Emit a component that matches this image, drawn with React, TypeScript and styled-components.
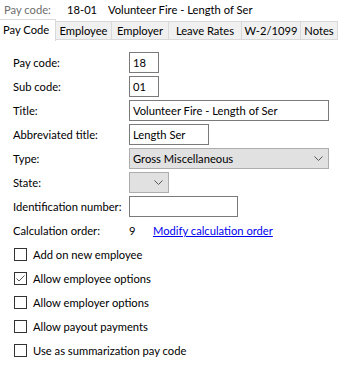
import styled, { createGlobalStyle } from "styled-components";

const GlobalStyle = createGlobalStyle`
  html, body {
    margin: 0;
    padding: 0;
    background: #ffffff;
  }
  body {
    font-family: Lato, "Liberation Sans", sans-serif;
    font-size: 11.2px;
    color: #000000;
  }
  * {
    box-sizing: border-box;
  }
`;

const tabs = [
  { name: "Pay Code", width: 56 },
  { name: "Employee", width: 56 },
  { name: "Employer", width: 57 },
  { name: "Leave Rates", width: 73 },
  { name: "W-2/1099", width: 59 },
  { name: "Notes", width: 37 },
];

const checks = [
  { label: "Add on new employee", checked: false },
  { label: "Allow employee options", checked: true },
  { label: "Allow employer options", checked: false },
  { label: "Allow payout payments", checked: false },
  { label: "Use as summarization pay code", checked: false },
];

function Chevron() {
  return (
    <svg width="9" height="5" viewBox="0 0 9 5">
      <path d="M0.5 0.5 L4.5 4.5 L8.5 0.5" fill="none" stroke="#555" strokeWidth="1" />
    </svg>
  );
}

function App() {
  return (
    <Page>
      <GlobalStyle />
      <Header>
        <HeaderLabel>Pay code:</HeaderLabel>
        <HeaderCode>18-01</HeaderCode>
        <HeaderTitle>Volunteer Fire - Length of Ser</HeaderTitle>
      </Header>
      <TabBar>
        {tabs.map((t, i) => (
          <Tab key={t.name} active={i === 0} width={t.width}>
            {t.name}
          </Tab>
        ))}
      </TabBar>
      <Panel>
        <Row>
          <Label>Pay code:</Label>
          <TextBox width={30}>18</TextBox>
        </Row>
        <Row>
          <Label>Sub code:</Label>
          <TextBox width={30}>01</TextBox>
        </Row>
        <Row>
          <Label>Title:</Label>
          <TextBox width={200}>Volunteer Fire - Length of Ser</TextBox>
        </Row>
        <Row>
          <Label>Abbreviated title:</Label>
          <TextBox width={80}>Length Ser</TextBox>
        </Row>
        <Row>
          <Label>Type:</Label>
          <Select width={200}>
            <span>Gross Miscellaneous</span>
            <Chevron />
          </Select>
        </Row>
        <Row>
          <Label>State:</Label>
          <Select width={40}>
            <span />
            <Chevron />
          </Select>
        </Row>
        <Row>
          <Label>Identification number:</Label>
          <TextBox width={109} />
        </Row>
        <Row>
          <Label>Calculation order:</Label>
          <OrderValue>9</OrderValue>
          <LinkText href="#">Modify calculation order</LinkText>
        </Row>
        {checks.map((c) => (
          <CheckRow key={c.label}>
            <Box>
              {c.checked && (
                <svg width="11" height="11" viewBox="0 0 11 11">
                  <path d="M1.5 5.5 L4 8 L9.5 2.5" fill="none" stroke="#555" strokeWidth="1" />
                </svg>
              )}
            </Box>
            <span>{c.label}</span>
          </CheckRow>
        ))}
      </Panel>
    </Page>
  );
}

export default App;

const Page = styled.div`
  width: 356px;
  height: 367px;
  background: #ffffff;
  overflow: hidden;
`;

const Header = styled.div`
  display: flex;
  align-items: center;
  height: 19px;
  padding-left: 4px;
  white-space: nowrap;
`;

const HeaderLabel = styled.span`
  color: #6d6d6d;
  width: 63px;
`;

const HeaderCode = styled.span`
  width: 41px;
`;

const HeaderTitle = styled.span``;

const TabBar = styled.div`
  display: flex;
  align-items: flex-end;
  height: 21px;
`;

const Tab = styled.div<{ active: boolean; width: number }>`
  width: ${(p) => p.width}px;
  height: ${(p) => (p.active ? "22px" : "19px")};
  margin-bottom: ${(p) => (p.active ? "-1px" : "0")};
  display: flex;
  align-items: center;
  justify-content: ${(p) => (p.active ? "flex-start" : "center")};
  padding-left: ${(p) => (p.active ? "3px" : "0")};
  padding-bottom: ${(p) => (p.active ? "2px" : "0")};
  background: ${(p) => (p.active ? "#ffffff" : "#f0f0f0")};
  border-top: 1px solid #d9d9d9;
  border-right: 1px solid #d9d9d9;
  border-bottom: ${(p) => (p.active ? "none" : "1px solid #d9d9d9")};
  white-space: nowrap;
`;

const Panel = styled.div`
  padding: 10px 0 0 13px;
  display: flex;
  flex-direction: column;
`;

const Row = styled.div`
  height: 24px;
  display: flex;
  align-items: center;
  white-space: nowrap;
`;

const Label = styled.span`
  width: 116px;
  flex-shrink: 0;
`;

const TextBox = styled.div<{ width: number }>`
  width: ${(p) => p.width}px;
  height: 21px;
  border: 1px solid #7a7a7a;
  padding: 0 3px;
  display: flex;
  align-items: center;
  background: #ffffff;
`;

const Select = styled.div<{ width: number }>`
  width: ${(p) => p.width}px;
  height: 21px;
  border: 1px solid #adadad;
  background: #e1e1e1;
  padding: 0 5px 0 3px;
  display: flex;
  align-items: center;
  justify-content: space-between;
`;

const OrderValue = styled.span`
  width: 24px;
`;

const LinkText = styled.a`
  color: #0000ee;
  text-decoration: underline;
`;

const CheckRow = styled.label`
  height: 24px;
  display: flex;
  align-items: center;
  gap: 6px;
  padding-left: 1px;
  white-space: nowrap;
`;

const Box = styled.span`
  width: 13px;
  height: 13px;
  border: 1px solid #333333;
  background: #ffffff;
  display: flex;
  align-items: center;
  justify-content: center;
`;
